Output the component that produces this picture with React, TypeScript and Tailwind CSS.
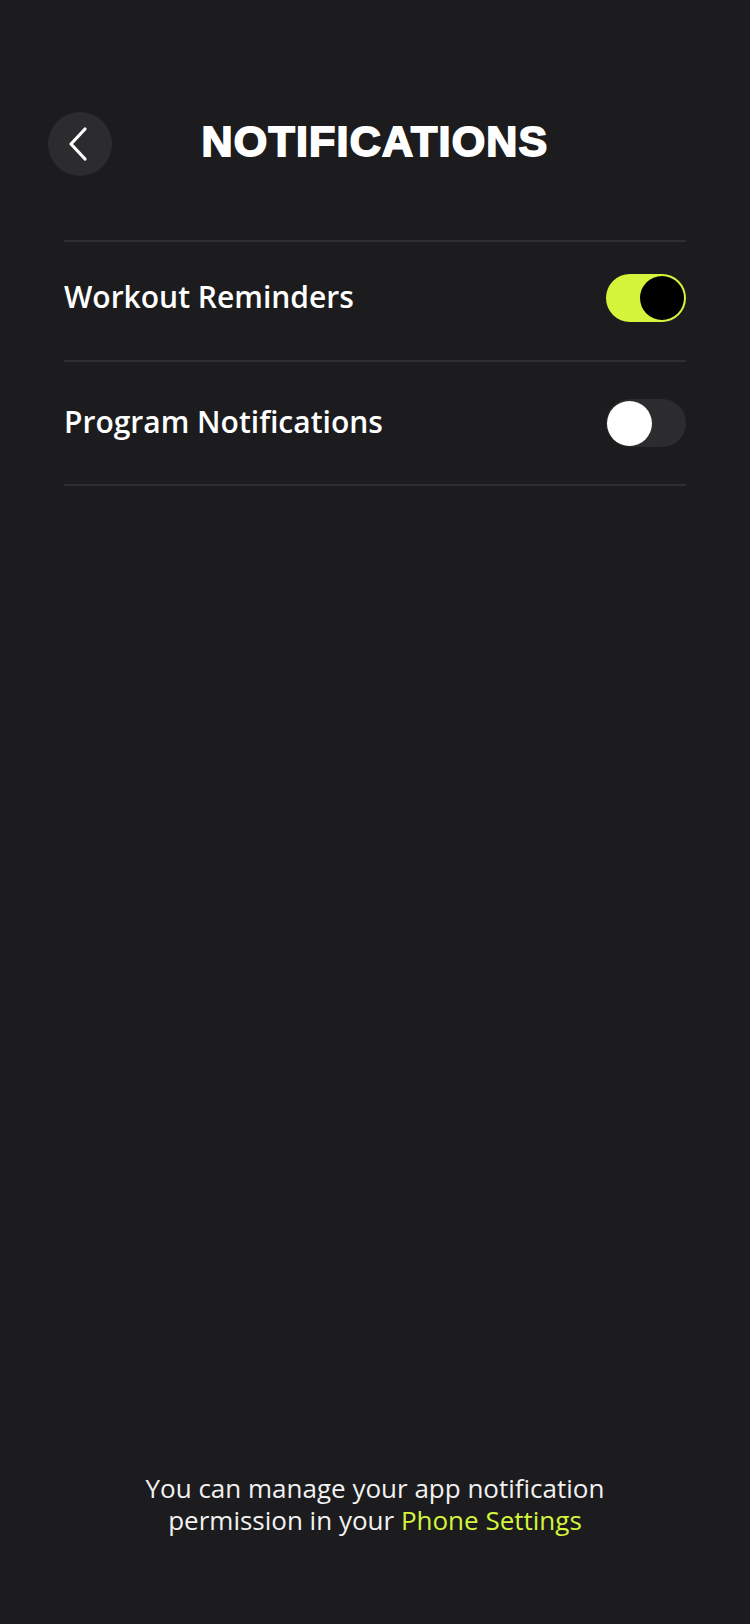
import React from "react";

function Toggle({ on }: { on: boolean }) {
  if (on) {
    return (
      <div className="flex h-[48px] w-[80px] items-center justify-end rounded-full bg-[#d4f53c] pr-[2px]">
        <div className="h-[44px] w-[44px] rounded-full bg-black" />
      </div>
    );
  }
  return (
    <div className="flex h-[48px] w-[80px] items-center justify-start rounded-full bg-[#2c2c2e] pl-[1px]">
      <div className="h-[45px] w-[45px] rounded-full bg-white" />
    </div>
  );
}

export default function App() {
  return (
    <div
      className="flex min-h-[1624px] w-[750px] flex-col bg-[#1c1c1e] text-white"
      style={{ fontFamily: '"Open Sans", "Noto Sans", sans-serif' }}
    >
      <div className="relative mt-[112px] flex h-[64px] items-center justify-center">
        <button className="absolute left-[48px] top-0 flex h-[64px] w-[64px] items-center justify-center rounded-full bg-[#2c2c2e]">
          <svg className="mr-[4px]" width="24" height="36" viewBox="0 0 24 36" fill="none">
            <path d="M19 3 L5 18 L19 33" stroke="white" strokeWidth="3.2" strokeLinecap="round" strokeLinejoin="round" />
          </svg>
        </button>
        <h1
          className="mb-[5px] text-[43px] font-black leading-none tracking-[1.2px]"
          style={{ fontFamily: '"Liberation Sans", Arial, sans-serif', WebkitTextStroke: "1.8px white" }}
        >
          NOTIFICATIONS
        </h1>
      </div>

      <div className="mx-[64px] mt-[64px] flex flex-col">
        <div className="h-[2px] bg-[#2e2e30]" />
        <div className="flex h-[118px] items-center justify-between pb-[7px]">
          <span className="mb-[2px] text-[30px] font-semibold leading-none">Workout Reminders</span>
          <Toggle on={true} />
        </div>
        <div className="h-[2px] bg-[#2e2e30]" />
        <div className="flex h-[122px] items-center justify-between">
          <span className="mb-[2px] text-[30px] font-semibold leading-none">Program Notifications</span>
          <Toggle on={false} />
        </div>
        <div className="h-[2px] bg-[#2e2e30]" />
      </div>

      <div className="flex-1" />

      <div className="mb-[88px] flex flex-col items-center text-[26px] text-[#f2f2f2]">
        <p className="h-[32px] leading-[32px]">You can manage your app notification</p>
        <p className="h-[32px] leading-[32px]">
          permission in your <span className="text-[#d4f53c]">Phone Settings</span>
        </p>
      </div>
    </div>
  );
}
